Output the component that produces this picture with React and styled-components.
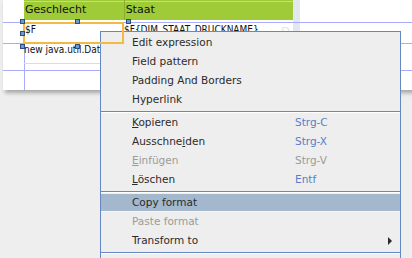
import styled, { createGlobalStyle } from 'styled-components'

//Styles
const GlobalStyle = createGlobalStyle`
    body {
        margin: 0;
        background: #eeeeee;
        font-family: "DejaVu Sans", "Liberation Sans", sans-serif;
    }
`

const Stage = styled.div`
    position: relative;
    width: 412px;
    height: 258px;
    overflow: hidden;
    background: #eeeeee;
`

const Page = styled.section`
    margin-left: 3px;
    width: 420px;
    height: 90px;
    background:
        linear-gradient(to right,
            transparent 21px, #a9abff 21px, #a9abff 22px,
            transparent 22px, transparent 290px,
            #e3e7ee 290px, #e3e7ee 297px, transparent 297px),
        #ffffff;
    box-shadow: 2px 3px 4px rgba(0, 0, 0, .3);
`

const HeaderBand = styled.div`
    display: flex;
    margin-left: 21px;
    width: 269px;
    height: 20px;
    margin-bottom: 2px;
    background: linear-gradient(#9ecb37 1px, #c9d3b4 1px, #c9d3b4 2px, #9ecb37 2px);
`

const HeaderCell = styled.div`
    width: ${p => p.$w}px;
    border-right: ${p => p.$sep ? '1px solid #86b22a' : 'none'};
    font-size: 11px;
    line-height: 19px;
    color: #111;
    padding-left: 1px;
    white-space: nowrap;
    overflow: hidden;
`

const GuideRow = styled.div`
    display: flex;
    border-top: 1px solid #a9abff;
    padding-left: 21px;
    height: ${p => p.$h}px;
`

const FieldCell = styled.div`
    position: relative;
    width: ${p => p.$w}px;
    height: 20px;
    font-family: "DejaVu Sans Condensed", "DejaVu Sans", sans-serif;
    font-stretch: condensed;
    font-size: 10px;
    line-height: 12px;
    color: #111;
    white-space: nowrap;
`

const SelectedCell = styled(FieldCell)`
    box-sizing: border-box;
    margin-left: -1px;
    margin-top: -1px;
    height: 22px;
    border: 2px solid #f4b942;
    padding-left: 0;
    z-index: 1;
`

const WideCell = styled(FieldCell)`
    display: flex;
    overflow: hidden;
    padding-top: 1px;
`

const Ghost = styled.span`
    margin-left: auto;
    margin-right: 3px;
    font-family: "DejaVu Sans", sans-serif;
    font-size: 13px;
    line-height: 16px;
    color: #e6e6e6;
`

const TextCell = styled(FieldCell)`
    height: 19px;
    border-bottom: 1px solid #dcdcdc;
    overflow: hidden;
`

const Handle = styled.span`
    position: absolute;
    left: ${p => p.$x}px;
    top: ${p => p.$y}px;
    width: 3px;
    height: 3px;
    background: #6b9ad2;
    border: 1px solid #2f4e78;
`

const Menu = styled.div`
    position: absolute;
    left: 100px;
    top: 31px;
    width: 299px;
    height: 240px;
    padding-top: 1px;
    background: #eeeeee;
    border: 1px solid #6687c4;
`

const Item = styled.div`
    display: grid;
    grid-template-columns: 163px 1fr auto;
    align-items: center;
    height: 19px;
    padding-left: 31px;
    font-size: 10.5px;
    line-height: 19px;
    color: ${p => p.$disabled ? '#9b9b9b' : '#2b2b2b'};
    background: ${p => p.$active ? '#a3b8cd' : 'transparent'};
    box-shadow: ${p => p.$active ? 'inset 0 -1px 0 #f6f6f6, inset 0 1px 0 #eeeeee' : 'none'};
    white-space: nowrap;
`

const Shortcut = styled.span`
    color: ${p => p.$disabled ? '#9b9b9b' : '#5a7dc6'};
`

const Arrow = styled.span`
    width: 0;
    height: 0;
    margin-right: 8px;
    border-left: 4px solid #2b2b2b;
    border-top: 4px solid transparent;
    border-bottom: 4px solid transparent;
`

const Separator = styled.div`
    height: 4px;
    background: linear-gradient(transparent 2px, #6687c4 2px, #6687c4 3px, #ffffff 3px);
`

//Component
const MenuItem = ({ label, shortcut, disabled, active, sub }) => (
    <Item $disabled={disabled} $active={active}>
        <span>{label}</span>
        <Shortcut $disabled={disabled}>{shortcut}</Shortcut>
        {sub ? <Arrow /> : <span />}
    </Item>
)

const App = () => {
    const handles = [[-5, -5], [50, -5], [101, -5], [-5, 7], [-5, 20], [50, 20]]

    return (
        <Stage>
            <GlobalStyle />
            <Page>
                <HeaderBand>
                    <HeaderCell $w={99} $sep>Geschlecht</HeaderCell>
                    <HeaderCell $w={168}>Staat</HeaderCell>
                </HeaderBand>
                <GuideRow $h={20}>
                    <SelectedCell $w={101}>
                        $F
                        {handles.map(([x, y]) => (
                            <Handle key={`${x}-${y}`} $x={x} $y={y} />
                        ))}
                    </SelectedCell>
                    <WideCell $w={169}>
                        {'$F{DIM_STAAT_DRUCKNAME}'}
                        <Ghost>D</Ghost>
                    </WideCell>
                </GuideRow>
                <GuideRow $h={26}>
                    <TextCell $w={269}>new java.util.Date()</TextCell>
                </GuideRow>
                <GuideRow $h={19} />
            </Page>

            <Menu>
                <MenuItem label="Edit expression" />
                <MenuItem label="Field pattern" />
                <MenuItem label="Padding And Borders" />
                <MenuItem label="Hyperlink" />
                <Separator />
                <MenuItem label={<><u>K</u>opieren</>} shortcut="Strg-C" />
                <MenuItem label={<>Ausschne<u>i</u>den</>} shortcut="Strg-X" />
                <MenuItem label={<><u>E</u>infügen</>} shortcut="Strg-V" disabled />
                <MenuItem label={<><u>L</u>öschen</>} shortcut="Entf" />
                <Separator />
                <MenuItem label="Copy format" active />
                <MenuItem label="Paste format" disabled />
                <MenuItem label="Transform to" sub />
                <Separator />
            </Menu>
        </Stage>
    )
}

export default App
